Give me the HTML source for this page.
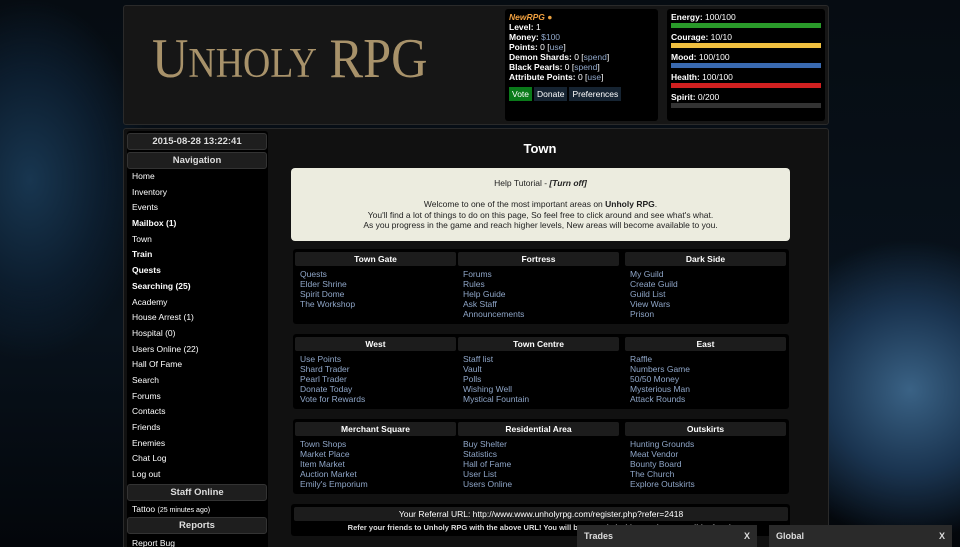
<!DOCTYPE html><html><head><style>
*{margin:0;padding:0;box-sizing:border-box}
html,body{width:960px;height:547px;overflow:hidden}
body{position:relative;font-family:"Liberation Sans",sans-serif;font-size:9px;color:#fff;
background:radial-gradient(ellipse 150px 150px at 910px 390px,#3a6285 0%,#1a3450 55%,transparent 100%),radial-gradient(ellipse 120px 180px at 30px 180px,#183650 0%,#0c1d2e 60%,transparent 100%),linear-gradient(#060c12,#08121c 60%,#03060a);}
.box{position:absolute;background:#161616;border:1px solid #2a2a2a;border-radius:3px}
.pan{position:absolute;background:#000;border-radius:3px}
a{color:#8fa6c8;text-decoration:none}
.b{font-weight:bold}
.sb div{height:15.7px;line-height:15.7px;padding-left:5px;font-size:8.5px}
.hd{background:#1e1e1e;border:1px solid #333;border-radius:3px;text-align:center;font-weight:bold;font-size:9.5px;color:#ddd}
.sec{position:absolute;left:293px;width:496px;height:75px;background:#000;border-radius:3px}
.col{position:absolute;top:3px;width:161px}
.col .h{height:14px;line-height:14px;background:#1c1c1c;border-radius:2px;text-align:center;font-weight:bold;font-size:8.5px}
.col .l{padding-left:5px;padding-top:3px;line-height:10px;font-size:8.5px;color:#8fa6c8}
.bar{height:5px;margin:1px 0 4px}
</style></head><body>
<div class="box" style="left:123px;top:5px;width:706px;height:120px"></div>
<div style="position:absolute;left:152px;top:27px;font-family:'Liberation Serif',serif;color:#a8926a;font-size:56px;line-height:64px;white-space:nowrap;transform:scaleX(0.9);transform-origin:left"><span>U<span style="font-size:42px">NHOLY</span> RPG</span></div>
<div class="pan" style="left:505px;top:9px;width:153px;height:112px;padding:3px 4px;line-height:10px;font-size:8.5px">
<div style="color:#f0a040;font-style:italic;font-weight:bold">NewRPG <span style="color:#e8a040">●</span></div>
<div><b>Level:</b> 1</div><div><b>Money:</b> <a>$100</a></div><div><b>Points:</b> 0 [<a>use</a>]</div>
<div><b>Demon Shards:</b> 0 [<a>spend</a>]</div><div><b>Black Pearls:</b> 0 [<a>spend</a>]</div><div><b>Attribute Points:</b> 0 [<a>use</a>]</div>
<div style="margin-top:5px;display:flex;gap:2px"><span style="background:#0a7a1a;padding:2px 3px">Vote</span><span style="background:#162432;padding:2px 3px">Donate</span><span style="background:#162432;padding:2px 3px">Preferences</span></div></div>
<div class="pan" style="left:667px;top:9px;width:158px;height:112px;padding:3px 4px;font-size:8.5px;line-height:10px">
<b>Energy:</b> 100/100<div class="bar" style="background:#2a9a2a"></div>
<b>Courage:</b> 10/10<div class="bar" style="background:#f0c040"></div>
<b>Mood:</b> 100/100<div class="bar" style="background:#3a6ab0"></div>
<b>Health:</b> 100/100<div class="bar" style="background:#d02020"></div>
<b>Spirit:</b> 0/200<div class="bar" style="background:#333"></div></div>
<div class="box" style="left:123px;top:128px;width:706px;height:430px;background:#111"></div>
<div class="pan" style="left:127px;top:131px;width:141px;height:420px"></div>
<div class="hd" style="position:absolute;left:127px;top:133px;width:140px;height:17px;line-height:16px">2015-08-28 13:22:41</div>
<div class="hd" style="position:absolute;left:127px;top:152px;width:140px;height:17px;line-height:16px">Navigation</div>
<div class="sb" style="position:absolute;left:127px;top:169px;width:140px">
<div>Home</div><div>Inventory</div><div>Events</div><div class="b">Mailbox (1)</div><div>Town</div><div class="b">Train</div><div class="b">Quests</div><div class="b">Searching (25)</div><div>Academy</div><div>House Arrest (1)</div><div>Hospital (0)</div><div>Users Online (22)</div><div>Hall Of Fame</div><div>Search</div><div>Forums</div><div>Contacts</div><div>Friends</div><div>Enemies</div><div>Chat Log</div><div>Log out</div></div>
<div class="hd" style="position:absolute;left:127px;top:484px;width:140px;height:17px;line-height:16px">Staff Online</div>
<div style="position:absolute;left:132px;top:504px;font-size:8.5px">Tattoo <span style="font-size:7px">(25 minutes ago)</span></div>
<div class="hd" style="position:absolute;left:127px;top:517px;width:140px;height:17px;line-height:16px">Reports</div>
<div style="position:absolute;left:132px;top:538px;font-size:8.5px">Report Bug</div>
<div style="position:absolute;left:275px;top:141px;width:530px;text-align:center;font-size:13px;font-weight:bold">Town</div>
<div style="position:absolute;left:291px;top:168px;width:499px;height:73px;background:#ececdf;border-radius:4px;color:#222;text-align:center;font-size:8.5px;line-height:10.5px;padding-top:10px">Help Tutorial - <b><i>[Turn off]</i></b><br><br>Welcome to one of the most important areas on <b>Unholy RPG</b>.<br>You'll find a lot of things to do on this page, So feel free to click around and see what's what.<br>As you progress in the game and reach higher levels, New areas will become available to you.</div>
<div class="sec" style="top:249px"><div class="col" style="left:2px"><div class="h">Town Gate</div><div class="l">Quests<br>Elder Shrine<br>Spirit Dome<br>The Workshop</div></div><div class="col" style="left:165px"><div class="h">Fortress</div><div class="l">Forums<br>Rules<br>Help Guide<br>Ask Staff<br>Announcements</div></div><div class="col" style="left:332px"><div class="h">Dark Side</div><div class="l">My Guild<br>Create Guild<br>Guild List<br>View Wars<br>Prison</div></div></div>
<div class="sec" style="top:334px"><div class="col" style="left:2px"><div class="h">West</div><div class="l">Use Points<br>Shard Trader<br>Pearl Trader<br>Donate Today<br>Vote for Rewards</div></div><div class="col" style="left:165px"><div class="h">Town Centre</div><div class="l">Staff list<br>Vault<br>Polls<br>Wishing Well<br>Mystical Fountain</div></div><div class="col" style="left:332px"><div class="h">East</div><div class="l">Raffle<br>Numbers Game<br>50/50 Money<br>Mysterious Man<br>Attack Rounds</div></div></div>
<div class="sec" style="top:419px"><div class="col" style="left:2px"><div class="h">Merchant Square</div><div class="l">Town Shops<br>Market Place<br>Item Market<br>Auction Market<br>Emily's Emporium</div></div><div class="col" style="left:165px"><div class="h">Residential Area</div><div class="l">Buy Shelter<br>Statistics<br>Hall of Fame<br>User List<br>Users Online</div></div><div class="col" style="left:332px"><div class="h">Outskirts</div><div class="l">Hunting Grounds<br>Meat Vendor<br>Bounty Board<br>The Church<br>Explore Outskirts</div></div></div>
<div class="pan" style="left:291px;top:504px;width:499px;height:32px"></div>
<div style="position:absolute;left:294px;top:507px;width:494px;height:14px;background:#1c1c1c;border-radius:2px;text-align:center;line-height:14px;font-size:8.5px">Your Referral URL: http://www.www.unholyrpg.com/register.php?refer=2418</div>
<div style="position:absolute;left:291px;top:523px;width:499px;text-align:center;font-size:7.5px;font-weight:bold;color:#ddd">Refer your friends to Unholy RPG with the above URL! You will be rewarded with 10 Points per valid referral!</div>
<div style="position:absolute;left:577px;top:525px;width:180px;height:22px;background:#2a2a2a;font-weight:bold;font-size:9px;line-height:22px;padding:0 7px;color:#ddd">Trades<span style="float:right">X</span></div>
<div style="position:absolute;left:769px;top:525px;width:183px;height:22px;background:#2a2a2a;font-weight:bold;font-size:9px;line-height:22px;padding:0 7px;color:#ddd">Global<span style="float:right">X</span></div>
</body></html>
